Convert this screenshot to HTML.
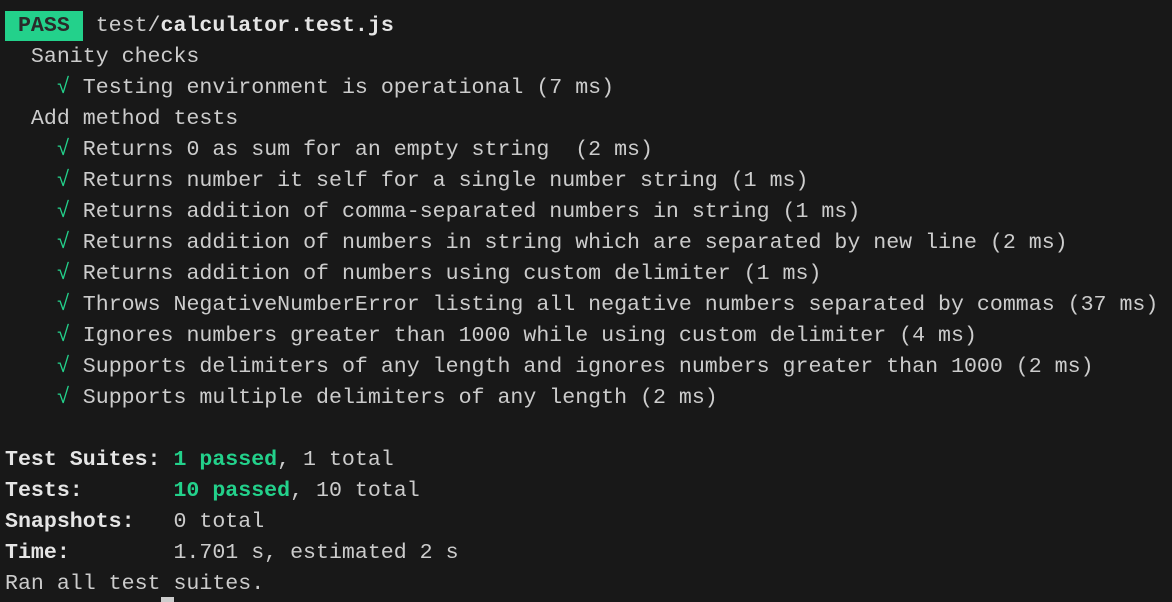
<!DOCTYPE html>
<html><head><meta charset="utf-8"><style>
html,body{margin:0;padding:0;background:#181818;width:1172px;height:602px;overflow:hidden}
pre{margin:0;padding:11px 0 0 5px;font-family:"Liberation Mono","DejaVu Sans Mono",monospace;font-size:21.6px;line-height:31px;color:#cccccc;white-space:pre}
.g{color:#23d18b}
b{font-weight:bold;color:#e5e5e5}
.gb{color:#23d18b;font-weight:bold}
.badge{background:#23d18b;color:#2a2a2a;font-weight:bold;display:inline-block;line-height:30px}
.cur{position:absolute;left:161px;top:597px;width:13px;height:5px;background:#cccccc}
</style></head><body>
<pre><span class="badge"> PASS </span> test/<b>calculator.test.js</b>
  Sanity checks
    <span class="g">√</span> Testing environment is operational (7 ms)
  Add method tests
    <span class="g">√</span> Returns 0 as sum for an empty string  (2 ms)
    <span class="g">√</span> Returns number it self for a single number string (1 ms)
    <span class="g">√</span> Returns addition of comma-separated numbers in string (1 ms)
    <span class="g">√</span> Returns addition of numbers in string which are separated by new line (2 ms)
    <span class="g">√</span> Returns addition of numbers using custom delimiter (1 ms)
    <span class="g">√</span> Throws NegativeNumberError listing all negative numbers separated by commas (37 ms)
    <span class="g">√</span> Ignores numbers greater than 1000 while using custom delimiter (4 ms)
    <span class="g">√</span> Supports delimiters of any length and ignores numbers greater than 1000 (2 ms)
    <span class="g">√</span> Supports multiple delimiters of any length (2 ms)

<b>Test Suites: </b><span class="gb">1 passed</span>, 1 total
<b>Tests:       </b><span class="gb">10 passed</span>, 10 total
<b>Snapshots:   </b>0 total
<b>Time:        </b>1.701 s, estimated 2 s
Ran all test suites.</pre>
<div class="cur"></div>
</body></html>
